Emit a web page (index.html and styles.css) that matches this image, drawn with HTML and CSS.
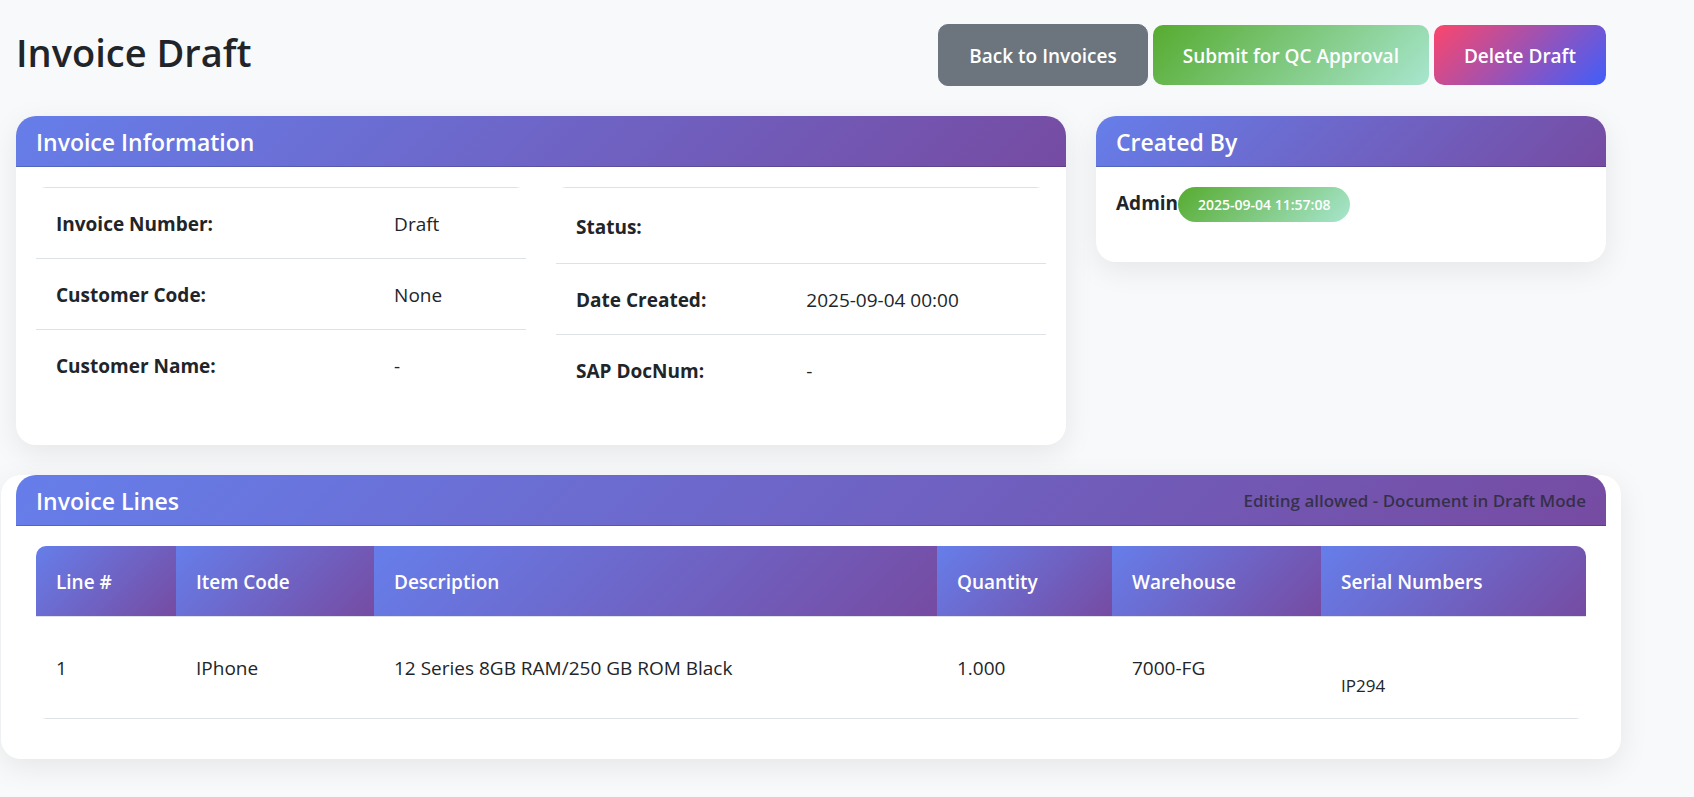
FILE: index.html
```html
<!DOCTYPE html>
<html lang="en">
<head>
<meta charset="utf-8">
<meta name="viewport" content="width=device-width, initial-scale=1">
<title>Invoice Draft</title>
<link rel="stylesheet" href="styles.css">
</head>
<body>
<main class="page">
  <header class="page-header">
    <h1 class="page-title">Invoice Draft</h1>
    <div class="actions">
      <a class="btn btn-back" href="#invoices">Back to Invoices</a>
      <button class="btn btn-submit" type="button">Submit for QC Approval</button>
      <button class="btn btn-delete" type="button">Delete Draft</button>
    </div>
  </header>

  <div class="summary">
    <section class="card">
      <h2 class="card-header">Invoice Information</h2>
      <div class="card-body info-grid">
        <div class="table-wrap">
          <table class="info-table info-invoice">
            <tr><th scope="row">Invoice Number:</th><td>Draft</td></tr>
            <tr><th scope="row">Customer Code:</th><td>None</td></tr>
            <tr><th scope="row">Customer Name:</th><td>-</td></tr>
          </table>
        </div>
        <div class="table-wrap">
          <table class="info-table info-status">
            <tr><th scope="row">Status:</th><td><span class="badge"></span></td></tr>
            <tr><th scope="row">Date Created:</th><td>2025-09-04 00:00</td></tr>
            <tr><th scope="row">SAP DocNum:</th><td>-</td></tr>
          </table>
        </div>
      </div>
    </section>

    <section class="card">
      <h2 class="card-header">Created By</h2>
      <div class="card-body creator">
        <strong>Admin</strong><span class="badge badge-date">2025-09-04 11:57:08</span>
      </div>
    </section>
  </div>

  <section class="card lines-card">
    <div class="card-header lines-header">
      <h2 class="lines-title">Invoice Lines</h2>
      <span class="lines-note">Editing allowed - Document in Draft Mode</span>
    </div>
    <div class="card-body">
      <div class="table-wrap">
        <table class="lines-table">
          <colgroup>
            <col class="col-line"><col class="col-code"><col class="col-desc"><col class="col-qty"><col class="col-wh"><col class="col-serial">
          </colgroup>
          <thead>
            <tr>
              <th scope="col">Line #</th>
              <th scope="col">Item Code</th>
              <th scope="col">Description</th>
              <th scope="col">Quantity</th>
              <th scope="col">Warehouse</th>
              <th scope="col">Serial Numbers</th>
            </tr>
          </thead>
          <tbody>
            <tr>
              <td>1</td>
              <td>IPhone</td>
              <td>12 Series 8GB RAM/250 GB ROM Black</td>
              <td>1.000</td>
              <td>7000-FG</td>
              <td><div class="serials">IP294</div></td>
            </tr>
          </tbody>
        </table>
      </div>
    </div>
  </section>
</main>
</body>
</html>
```
FILE: styles.css
```css
* {
  box-sizing: border-box;
}

body {
  margin: 0;
  background: #f8f9fb;
  color: #212529;
  font-family: "Segoe UI", "Open Sans", "Noto Sans", sans-serif;
  font-size: 19px;
  line-height: 30px;
}

.page {
  padding: 24px 73px 38px 1px;
}

.page-header {
  display: flex;
  justify-content: space-between;
  padding: 0 15px;
  margin-bottom: 30px;
}

.page-title {
  margin: 4px 0 0;
  font-size: 38px;
  font-weight: 600;
  line-height: 48px;
}

.actions {
  display: flex;
  align-items: center;
  gap: 5px;
}

.btn {
  border: 0;
  border-radius: 10px;
  padding: 16px 30px 14px;
  color: #fff;
  font: inherit;
  font-weight: 600;
  text-decoration: none;
  white-space: nowrap;
}

.btn-back {
  border: 1px solid #6c757d;
  background: #6c757d;
}

.btn-submit {
  background: linear-gradient(135deg, #56ab2f, #a8e6cf);
}

.btn-delete {
  background: linear-gradient(135deg, #fc466b, #3f5efb);
}

.summary {
  display: grid;
  grid-template-columns: 35fr 17fr;
  align-items: start;
  gap: 30px;
  padding: 0 15px;
  margin-bottom: 30px;
}

.card {
  border-radius: 20px;
  background: #fff;
  box-shadow: 0 8px 30px rgba(0, 0, 0, 0.08);
}

.card-header {
  margin: 0;
  padding: 11px 20px 9px;
  border-bottom: 1px solid rgba(0, 0, 0, 0.18);
  border-radius: 20px 20px 0 0;
  background: linear-gradient(135deg, #667eea, #764ba2);
  color: #fff;
  font-size: 23px;
  font-weight: 600;
  line-height: 30px;
}

.card-body {
  padding: 20px;
}

.info-grid {
  display: grid;
  grid-template-columns: 1fr 1fr;
  align-items: start;
  gap: 30px;
}

.table-wrap {
  margin-bottom: 20px;
  overflow: hidden;
  border-radius: 10px;
}

table {
  width: 100%;
  border-spacing: 0;
  table-layout: fixed;
}

th,
td {
  padding: 20px;
  text-align: left;
}

.lines-table th,
.info-table th,
.info-table td {
  padding: 21px 20px 19px;
}

.info-table th,
.info-table td {
  border-top: 1px solid #dee2e6;
}

.info-invoice th {
  width: 69%;
}

.info-status th {
  width: 47%;
}

.badge {
  display: inline-block;
  height: 35px;
  padding: 0 20px;
  vertical-align: middle;
}

.badge-date {
  border-radius: 20px;
  background: linear-gradient(135deg, #56ab2f, #a8e6cf);
  color: #fff;
  font-size: 14px;
  font-weight: 600;
  line-height: 35px;
}

.creator {
  display: flex;
  padding-bottom: 40px;
}

.creator strong {
  line-height: 32px;
}

.lines-header {
  display: flex;
  align-items: center;
  justify-content: space-between;
  margin: 0 15px;
}

.lines-title {
  margin: 0;
  font-size: inherit;
  font-weight: inherit;
}

.lines-note {
  color: rgba(33, 37, 41, 0.75);
  font-size: 17px;
  font-weight: 600;
}

.lines-card .card-body {
  padding: 20px 35px;
}

.lines-table th {
  background: linear-gradient(135deg, #667eea, #764ba2);
  color: #fff;
  font-weight: 600;
}

.lines-table td {
  border-top: 1px solid #dee2e6;
  border-bottom: 1px solid #dee2e6;
}

.col-line { width: 140px; }
.col-code { width: 198px; }
.col-qty { width: 175px; }
.col-wh { width: 209px; }
.col-serial { width: 265px; }

.serials {
  padding-top: 36px;
  font-size: 17px;
  line-height: 25px;
}
```
